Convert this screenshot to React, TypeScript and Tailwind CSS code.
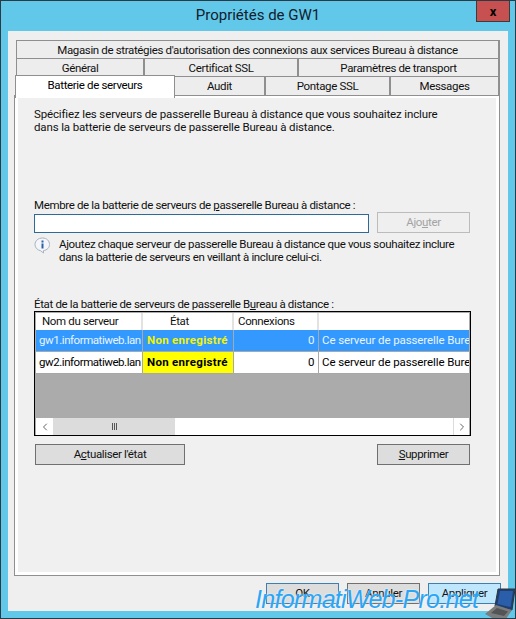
import { ChevronLeft, ChevronRight } from "lucide-react";

const rows = [
  { name: "gw1.informatiweb.lan", connexions: "0", selected: true },
  { name: "gw2.informatiweb.lan", connexions: "0", selected: false },
];

function TabCell({ label, className }: { label: string; className: string }) {
  return (
    <div className={`flex items-center justify-center bg-[#ededed] border-r-2 border-[#8f8f8f] pt-px ${className}`}>
      {label}
    </div>
  );
}

function InfoIcon() {
  return (
    <svg width="17" height="17" viewBox="0 0 17 17">
      <path d="M8.5 1C4.2 1 1 3.8 1 7.500c0 3.200 2.400 5.600 5.500 6.200L9.500 16v-2.400c3.600-.5 6-3 6-6.100C15.500 3.800 12.800 1 8.500 1z" fill="#f4f6f9" stroke="#a9b2bd" />
      <rect x="7.500" y="3.500" width="2" height="2" fill="#2a62a8" />
      <rect x="7.500" y="6.500" width="2" height="5" fill="#2a62a8" />
    </svg>
  );
}

function Laptop() {
  return (
    <svg width="32" height="31" viewBox="0 0 32 31">
      <path d="M14 1 L31 1 L28 22 L11 18 Z" fill="#1d3f74" stroke="#30343a" />
      <path d="M16 3 L29 3 L26.500 19 L13.500 16 Z" fill="#2a5ea8" />
      <path d="M1 26 L12 17 L28 22 L22 31 L10 31 Z" fill="#7a7c7d" />
      <path d="M7 25 L13 20 L24 23.500 L20 28 Z" fill="#525456" />
    </svg>
  );
}

export default function App() {
  return (
    <div
      className="relative flex flex-col w-[516px] h-[619px] overflow-hidden bg-[#62c8ea] border border-[#2c3a46] text-[11.5px] leading-[13px] tracking-[-0.35px] text-[#111] whitespace-nowrap"
      style={{ fontFamily: 'Roboto, "Liberation Sans", sans-serif' }}
    >
      {/* Title bar */}
      <div className="relative flex h-[30px] shrink-0 items-center justify-center pb-[2px] text-[15px] tracking-normal text-[#10202c]">
        Propriétés de GW1
        <div className="absolute right-[5px] top-[-1px] flex h-[22px] w-[34px] items-center justify-center bg-[#c75050] border border-[#3c3c3c] text-[13px] font-bold text-black">
          x
        </div>
      </div>

      <div className="mx-[7px] flex h-[580px] flex-col bg-[#efefef] pl-[6px] pr-[8px] pt-[9px]">
        {/* Tabs */}
        <div className="ml-[2px] flex flex-col border-l border-t border-[#8f8f8f]">
          <div className="flex h-[18px] items-center justify-center bg-[#ededed] border-r-2 border-b border-[#8f8f8f] pt-px">
            Magasin de stratégies d'autorisation des connexions aux services Bureau à distance
          </div>
          <div className="flex h-[18px] border-b border-[#8f8f8f]">
            <TabCell label="Général" className="w-[128px]" />
            <TabCell label="Certificat SSL" className="w-[154px]" />
            <TabCell label="Paramètres de transport" className="flex-1" />
          </div>
          <div className="flex h-[18px]">
            <div className="w-[158px]" />
            <TabCell label="Audit" className="w-[91px]" />
            <TabCell label="Pontage SSL" className="w-[125px]" />
            <TabCell label="Messages" className="flex-1" />
          </div>
        </div>

        {/* Panel */}
        <div className="relative flex h-[481px] flex-col border border-[#8f8f8f] bg-[#f0f0f0]">
          <div className="absolute left-0 top-[-21px] z-10 flex h-[23px] w-[160px] items-center justify-center bg-white border-x border-t border-[#8f8f8f] pb-[4px] text-black">
            Batterie de serveurs
          </div>
          <div className="flex flex-1 flex-col border-x-[3px] border-t-2 border-b-[3px] border-white pl-[16px] pr-[26px] pt-[10px]">
            <p className="tracking-[-0.14px]">
              Spécifiez les serveurs de passerelle Bureau à distance que vous souhaitez inclure
              <br />
              dans la batterie de serveurs de passerelle Bureau à distance.
            </p>

            <div className="mt-[65px]">
              Membre de la batterie de serveurs de <span className="underline">p</span>asserelle Bureau à distance :
            </div>
            <div className="flex items-end">
              <div className="h-[19px] w-[335px] bg-white border border-[#2d6a97]" />
              <div className="ml-[8px] flex h-[21px] w-[93px] items-center justify-center bg-[#efefef] border border-[#bcbcbc] text-[#a3a3a3]">
                Ajo<span className="underline">u</span>ter
              </div>
            </div>

            <div className="mt-[5px] flex">
              <div className="-mt-px w-[25px] shrink-0">
                <InfoIcon />
              </div>
              <p>
                Ajoutez chaque serveur de passerelle Bureau à distance que vous souhaitez inclure
                <br />
                dans la batterie de serveurs en veillant à inclure celui-ci.
              </p>
            </div>

            <div className="mt-[34px]">
              État de la batterie de serveurs de passerelle B<span className="underline">u</span>reau à distance :
            </div>

            {/* Server grid */}
            <div className="flex h-[125px] w-[437px] flex-col border border-black bg-[#ababab] p-px pb-0">
              <div className="grid h-[17px] grid-cols-[107px_91px_85px_1fr] bg-white">
                <div className="flex items-center justify-start border-r-2 border-[#e2e2e2] pl-[6px]">Nom du serveur</div>
                <div className="flex items-center border-r-2 border-[#e2e2e2] pl-[27px]">État</div>
                <div className="flex items-center border-r-2 border-[#e2e2e2] pl-[4px]">Connexions</div>
                <div />
              </div>
              {rows.map((row) => (
                <div
                  key={row.name}
                  className={`grid h-[22px] grid-cols-[107px_91px_85px_1fr] border-b border-[#a8a8a8] ${row.selected ? "bg-[#3399ff] text-[#e8f4ff]" : "bg-white text-black"}`}
                >
                  <div className="flex items-center overflow-hidden border-r border-[#a8a8a8] pl-[3px] tracking-[-0.45px]">{row.name}</div>
                  <div className={`flex items-center overflow-hidden border-r border-[#a8a8a8] pl-[4px] font-bold tracking-[0.3px] ${row.selected ? "text-[#f4f400]" : "bg-[#ffff00] text-black"}`}>
                    Non enregistré
                  </div>
                  <div className="flex items-center justify-end border-r border-[#a8a8a8] pr-[4px]">{row.connexions}</div>
                  <div className="flex items-center overflow-hidden pl-[3px] tracking-[-0.1px]">Ce serveur de passerelle Bureau à distance</div>
                </div>
              ))}
              <div className="flex-1" />
              <div className="flex h-[17px] items-stretch bg-white">
                <div className="flex w-[17px] items-center justify-center text-[#666]">
                  <ChevronLeft size={12} strokeWidth={2} />
                </div>
                <div className="flex w-[122px] items-center justify-center bg-[#dcdcdc] text-[#555]">
                  <span className="flex gap-px">
                    <span className="h-[7px] w-px bg-[#555]" />
                    <span className="h-[7px] w-px bg-[#555]" />
                    <span className="h-[7px] w-px bg-[#555]" />
                  </span>
                </div>
                <div className="flex-1" />
                <div className="flex w-[16px] items-center justify-center border-l border-[#dcdcdc] text-[#666]">
                  <ChevronRight size={12} strokeWidth={2} />
                </div>
              </div>
            </div>

            <div className="ml-px mt-[8px] flex w-[435px] justify-between">
              <div className="flex h-[21px] w-[150px] items-center justify-center bg-[#dddddd] border border-[#707070]">
                A<span className="underline">c</span>tualiser l'état
              </div>
              <div className="flex h-[21px] w-[93px] items-center justify-center bg-[#dddddd] border border-[#707070]">
                <span className="underline">S</span>upprimer
              </div>
            </div>
          </div>
        </div>

        {/* Dialog buttons */}
        <div className="-mr-px mt-[7px] flex justify-end gap-[8px]">
          <div className="flex h-[21px] w-[73px] items-center justify-center bg-[#dddddd] border border-[#3c7fb1]">OK</div>
          <div className="flex h-[21px] w-[73px] items-center justify-center bg-[#dddddd] border border-[#707070]">Annuler</div>
          <div className="flex h-[21px] w-[73px] items-center justify-center bg-[#bee6fd] border border-[#3c7fb1]">Appliquer</div>
        </div>
      </div>

      {/* Watermark */}
      <div
        className="absolute left-[254px] top-[582px] z-20 text-[25px] italic leading-[32px] tracking-[-0.7px] text-[#2ba6f5] [text-shadow:0_0_2px_rgba(255,255,255,0.8)]"
        style={{ fontFamily: '"Liberation Sans", sans-serif' }}
      >
        InformatiWeb-Pro.net
      </div>
      <div className="absolute left-[483px] top-[587px] z-20">
        <Laptop />
      </div>
    </div>
  );
}
